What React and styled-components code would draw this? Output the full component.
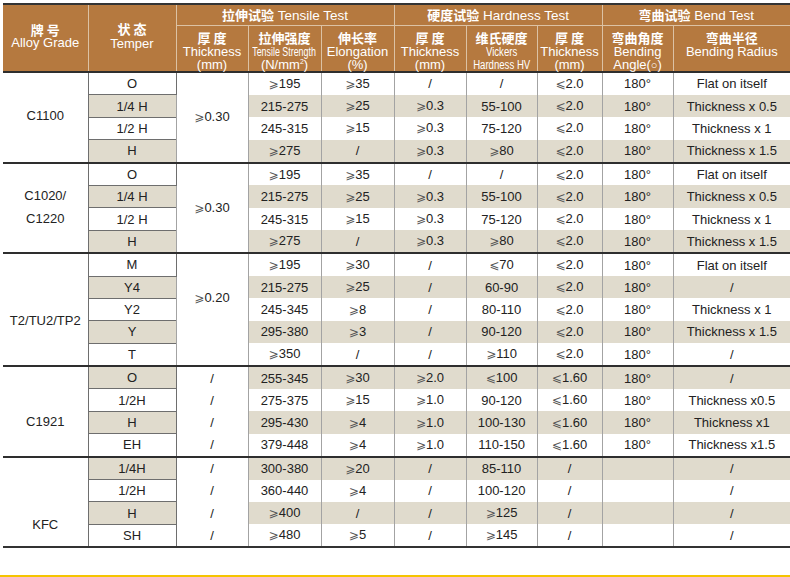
import styled, { createGlobalStyle } from "styled-components";

const GlobalStyle = createGlobalStyle`
    html, body {
        margin: 0;
        padding: 0;
        background: #fff;
        overflow: hidden;
    }
`;

const Page = styled.div`
    width: 790px;
    height: 577px;
    padding: 3px 0 0 3px;
    box-sizing: border-box;
    display: flex;
    flex-direction: column;
    font-family: "Liberation Sans", "Noto Sans CJK SC", sans-serif;
`;

const Table = styled.table`
    width: 787px;
    border-collapse: collapse;
    table-layout: fixed;
    border-top: 2px solid #333;
    border-bottom: 2px solid #333;
    border-left: hidden;
    border-right: hidden;
`;

const GroupHead = styled.th`
    height: 20px;
    padding: 0;
    background: #b5793f;
    color: #fff;
    font-weight: normal;
    font-size: 13.5px;
    line-height: 14px;
    border: 1px solid #dcc2a4;
    vertical-align: middle;
    white-space: nowrap;
`;

const SubHead = styled.th`
    height: ${props => props.$top ? "40px" : "auto"};
    padding: ${props => props.$top ? "5px 0 0" : "0 0 4px"};
    background: #b5793f;
    color: #fff;
    font-weight: normal;
    font-size: 13px;
    line-height: 13px;
    border: 1px solid #dcc2a4;
    vertical-align: ${props => props.$top ? "top" : "middle"};
    white-space: nowrap;
`;

const Zh = styled.span`
    display: ${props => props.$inline ? "inline" : "block"};
    font-family: "Noto Sans CJK SC", sans-serif;
    font-weight: 700;
    font-size: 13px;
    line-height: ${props => props.$lh || "14px"};
`;

const Line = styled.span`
    display: block;
    height: ${props => props.$lh || "13px"};
    line-height: ${props => props.$lh || "13px"};
    overflow: visible;
`;

const Sup = styled.sup`
    font-size: 7px;
    line-height: 0;
`;

const Circle = styled.span`
    font-size: 11px;
    line-height: 0;
`;

const Narrow = styled.span`
    display: inline-block;
    white-space: nowrap;
    font-size: 12px;
    transform: scaleX(${props => props.$scale || 0.74});
    margin: 0 -24px;
`;

const Row = styled.tr`
    border-top: ${props => props.$start ? "2px solid #2e2e2e" : "none"};
`;

const Cell = styled.td`
    height: 21.4px;
    padding: 0;
    text-align: center;
    vertical-align: middle;
    font-size: 13px;
    line-height: 15px;
    color: #222;
    white-space: nowrap;
    border-left: 1px solid #a3a3a3;
    border-right: 1px solid #a3a3a3;
    background: ${props => props.$shaded ? "#e0dbcd" : "#fff"};
`;

const AlloyCell = styled(Cell)`
    border-right: 1px solid #6e6e6e;
    line-height: 23px;
    padding: ${props => props.$shift > 0 ? `${props.$shift * 2}px 0 0` : `0 0 ${-props.$shift * 2}px`};
`;

const TemperCell = styled(Cell)`
    border: 1px solid #6e6e6e;
`;

const ThickCell = styled(Cell)`
    padding: ${props => props.$shift > 0 ? `${props.$shift * 2}px 0 0` : `0 0 ${-props.$shift * 2}px`};
`;

const Rel = styled.span`
    color: #555;
    font-family: "DejaVu Sans", sans-serif;
    font-size: 12px;
`;

const Footer = styled.div`
    margin-top: 27px;
    margin-left: -3px;
    width: 790px;
    height: 2px;
    flex-shrink: 0;
    background: #f5c400;
`;

const widths = [85, 88, 72, 73, 73, 72, 71, 65, 71, 117];

const common = [
    ["O", "≥195", "≥35", "/", "/", "≤2.0", "180°", "Flat on itself"],
    ["1/4 H", "215-275", "≥25", "≥0.3", "55-100", "≤2.0", "180°", "Thickness x 0.5"],
    ["1/2 H", "245-315", "≥15", "≥0.3", "75-120", "≤2.0", "180°", "Thickness x 1"],
    ["H", "≥275", "/", "≥0.3", "≥80", "≤2.0", "180°", "Thickness x 1.5"],
];

const sections = [
    { alloy: ["C1100"], shift: -2, thick: "≥0.30", thickShift: 0, shadeOdd: true, rows: common },
    { alloy: ["C1020/", "C1220"], shift: -1, thick: "≥0.30", thickShift: 0, shadeOdd: true, rows: common },
    {
        alloy: ["T2/TU2/TP2"], shift: 11, thick: "≥0.20", thickShift: -12, shadeOdd: true,
        rows: [
            ["M", "≥195", "≥30", "/", "≤70", "≤2.0", "180°", "Flat on itself"],
            ["Y4", "215-275", "≥25", "/", "60-90", "≤2.0", "180°", "/"],
            ["Y2", "245-345", "≥8", "/", "80-110", "≤2.0", "180°", "Thickness x 1"],
            ["Y", "295-380", "≥3", "/", "90-120", "≤2.0", "180°", "Thickness x 1.5"],
            ["T", "≥350", "/", "/", "≥110", "≤2.0", "180°", "/"],
        ],
    },
    {
        alloy: ["C1921"], shift: 10, thick: null, shadeOdd: false,
        rows: [
            ["O", "255-345", "≥30", "≥2.0", "≤100", "≤1.60", "180°", "/"],
            ["1/2H", "275-375", "≥15", "≥1.0", "90-120", "≤1.60", "180°", "Thickness x0.5"],
            ["H", "295-430", "≥4", "≥1.0", "100-130", "≤1.60", "180°", "Thickness x1"],
            ["EH", "379-448", "≥4", "≥1.0", "110-150", "≤1.60", "180°", "Thickness x1.5"],
        ],
    },
    {
        alloy: ["KFC"], shift: 23, thick: null, shadeOdd: false,
        rows: [
            ["1/4H", "300-380", "≥20", "/", "85-110", "/", "", "/"],
            ["1/2H", "360-440", "≥4", "/", "100-120", "/", "", "/"],
            ["H", "≥400", "/", "/", "≥125", "/", "", "/"],
            ["SH", "≥480", "≥5", "/", "≥145", "/", "", "/"],
        ],
    },
];

function Value({ text }) {
    if (text.startsWith("≥") || text.startsWith("≤")) {
        return (
            <>
                <Rel>{text[0] === "≥" ? "⩾" : "⩽"}</Rel>
                {text.slice(1)}
            </>
        );
    }
    return text;
}

function Section({ section }) {
    const { alloy, shift, thick, thickShift, shadeOdd, rows } = section;
    return rows.map((row, i) => {
        const shaded = shadeOdd ? i % 2 === 1 : i % 2 === 0;
        const [temper, ...rest] = row;
        return (
            <Row key={i} $start={i === 0}>
                {i === 0 && (
                    <AlloyCell rowSpan={rows.length} $shift={shift}>
                        {alloy.map(a => <div key={a}>{a}</div>)}
                    </AlloyCell>
                )}
                <TemperCell $shaded={shaded}>{temper}</TemperCell>
                {thick
                    ? i === 0 && (
                        <ThickCell rowSpan={rows.length} $shift={thickShift}>
                            <Value text={thick} />
                        </ThickCell>
                    )
                    : <Cell>/</Cell>}
                {rest.map((v, j) => (
                    <Cell key={j} $shaded={shaded}><Value text={v} /></Cell>
                ))}
            </Row>
        );
    });
}

export default function App() {
    return (
        <Page>
            <GlobalStyle />
            <Table>
                <colgroup>
                    {widths.map((w, i) => <col key={i} style={{ width: w }} />)}
                </colgroup>
                <thead>
                    <tr>
                        <SubHead rowSpan={2}>
                            <Zh $lh="14px">牌 号</Zh>
                            <Line $lh="12px">Alloy Grade</Line>
                        </SubHead>
                        <SubHead rowSpan={2}>
                            <Zh $lh="16px">状 态</Zh>
                            <Line $lh="14px">Temper</Line>
                        </SubHead>
                        <GroupHead colSpan={3}><Zh $inline>拉伸试验</Zh> Tensile Test</GroupHead>
                        <GroupHead colSpan={3}><Zh $inline>硬度试验</Zh> Hardness Test</GroupHead>
                        <GroupHead colSpan={2}><Zh $inline>弯曲试验</Zh> Bend Test</GroupHead>
                    </tr>
                    <tr>
                        <SubHead $top>
                            <Zh>厚 度</Zh>
                            <Line>Thickness</Line>
                            <Line>(mm)</Line>
                        </SubHead>
                        <SubHead $top>
                            <Zh>拉伸强度</Zh>
                            <Line><Narrow>Tensile Strength</Narrow></Line>
                            <Line>(N/mm<Sup>2</Sup>)</Line>
                        </SubHead>
                        <SubHead $top>
                            <Zh>伸长率</Zh>
                            <Line>Elongation</Line>
                            <Line>(%)</Line>
                        </SubHead>
                        <SubHead $top>
                            <Zh>厚 度</Zh>
                            <Line>Thickness</Line>
                            <Line>(mm)</Line>
                        </SubHead>
                        <SubHead $top>
                            <Zh>维氏硬度</Zh>
                            <Line><Narrow $scale={0.8}>Vickers</Narrow></Line>
                            <Line><Narrow $scale={0.8}>Hardness HV</Narrow></Line>
                        </SubHead>
                        <SubHead $top>
                            <Zh>厚 度</Zh>
                            <Line>Thickness</Line>
                            <Line>(mm)</Line>
                        </SubHead>
                        <SubHead $top>
                            <Zh>弯曲角度</Zh>
                            <Line>Bending</Line>
                            <Line>Angle(<Circle>○</Circle>)</Line>
                        </SubHead>
                        <SubHead $top>
                            <Zh>弯曲半径</Zh>
                            <Line>Bending Radius</Line>
                        </SubHead>
                    </tr>
                </thead>
                <tbody>
                    {sections.map((s, i) => <Section key={i} section={s} />)}
                </tbody>
            </Table>
            <Footer />
        </Page>
    );
}
